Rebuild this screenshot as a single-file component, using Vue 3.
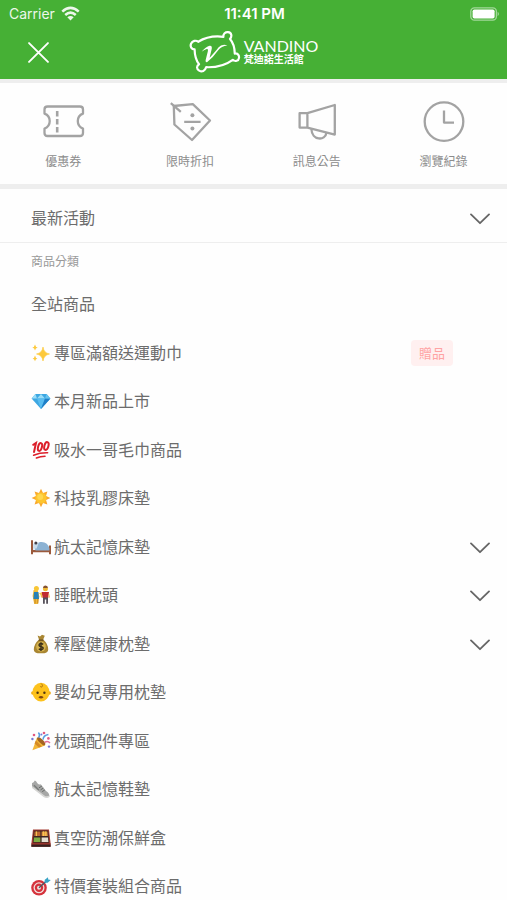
<template>
  <div class="app-shell">
    <header class="app-header">
      <div class="status-bar">
        <div class="carrier">
          <span>Carrier</span>
          <svg class="wifi" viewBox="0 0 18 14" aria-hidden="true">
            <path d="M1.2 5.2 Q9 -2 16.8 5.2" />
            <path d="M4 8.4 Q9 3.9 14 8.4" />
            <path class="wifi-dot" d="M9 13.6 L6 10.6 Q9 8 12 10.6 Z" />
          </svg>
        </div>
        <span class="time">11:41 PM</span>
        <div class="battery-wrap">
          <svg class="battery" viewBox="0 0 30 14" aria-hidden="true">
            <rect x="0.8" y="0.8" width="25.6" height="12.4" rx="3.6" fill="none" stroke="#fff" stroke-opacity="0.5" stroke-width="1.3" />
            <rect x="2.6" y="2.4" width="22" height="9.2" rx="1.8" fill="#fff" />
            <path d="M27.7 4.8 Q30 7 27.7 9.2 Z" fill="#fff" fill-opacity="0.55" />
          </svg>
        </div>
      </div>

      <div class="nav-bar">
        <button class="close-btn" type="button" aria-label="關閉">
          <svg viewBox="0 0 20 20"><path d="M1 1 L19 19 M19 1 L1 19" /></svg>
        </button>
        <a class="brand" href="#">
          <svg class="brand-mark" viewBox="0 0 52 42" aria-hidden="true">
            <path
              class="pillow"
              d="M9.2 10.8 Q20 4 34.4 5.8 C34 2.8 36.4 1 39 1.2 C42.8 1.6 43.2 5.6 41 8 Q45.5 13 45.8 22.6 C48 22 50.4 23.8 50 26.8 C49.6 30 46.2 31 43.8 28.8 Q33 36.8 17.2 36.2 C16 40 13 41.2 10.2 39.6 C7 37.8 7.8 34.6 10 33.2 Q5.8 27.6 5.6 18.4 C2.4 18.2 1 15.6 2 12.8 C3.4 9.8 7 8.8 9.2 10.8 Z"
            />
            <path
              class="letter"
              d="M12.6 20.8 Q16.8 15.6 20.6 14.8 Q23.6 14.4 22.6 18.6 L20.6 26.8 Q27 20 29.4 16.6 Q32.8 12.6 38.4 14.4 Q32.4 14.6 29 19.6 Q24.4 26.4 18 31.2 Q16.2 31.4 16.6 29.2 L18.8 20.6 Q19.6 17.4 17.8 18 Q15.6 18.6 12.6 20.8 Z"
            />
          </svg>
          <span class="brand-text">
            <span class="brand-en">VANDINO</span>
            <span class="brand-zh">梵迪諾生活館</span>
          </span>
        </a>
      </div>
    </header>

    <nav class="quick-links">
      <a v-for="link in quickLinks" :key="link.icon" class="quick-link" href="#">
        <svg viewBox="0 0 44 44" aria-hidden="true">
          <g v-if="link.icon === 'coupon'">
            <path d="M6.5 7.5 H39 Q42 7.5 42 10.5 V14.6 A8 8 0 0 0 42 29.6 V34 Q42 37 39 37 H6.5 Q3.5 37 3.5 34 V29.6 A8 8 0 0 0 3.5 14.6 V10.5 Q3.5 7.5 6.5 7.5 Z" />
            <path d="M16.2 12 V17.5 M16.2 20 V25.5 M16.2 28 V33.5" stroke-width="2.6" />
          </g>
          <g v-else-if="link.icon === 'discount'">
            <path d="M5.8 7 L24.8 5.2 L42 21.5 L24 41 L6.4 25.5 Z" />
            <path d="M2.8 4.2 L12.8 12.8 M16.2 22.8 H32.6" />
            <circle cx="24.4" cy="16.2" r="2" class="dot" />
            <circle cx="24.4" cy="29.6" r="2" class="dot" />
          </g>
          <g v-else-if="link.icon === 'news'">
            <path d="M4.6 14.2 H12.4 L39.8 6 V35.6 L12.4 28.6 H4.6 Z M12.4 14.2 V28.6" />
            <path d="M16.4 30 C16.8 41.6 30.4 42.2 31.4 33.8" />
          </g>
          <g v-else>
            <circle cx="22" cy="22.6" r="19.3" />
            <path d="M22 11.6 V23.6 H32" />
          </g>
        </svg>
        <span>{{ link.label }}</span>
      </a>
    </nav>

    <main class="menu">
      <button class="menu-row activity" type="button">
        <span>最新活動</span>
        <svg class="chevron" viewBox="0 0 20 14" aria-hidden="true"><path d="M1 3.4 L10 12.2 L19 3.4" /></svg>
      </button>

      <h2 class="section-title">商品分類</h2>
      <ul class="category-list">
        <li v-for="item in categories" :key="item.name">
          <component
            :is="item.children ? 'button' : 'a'"
            class="menu-row"
            :href="item.children ? undefined : '#'"
            :type="item.children ? 'button' : undefined"
          >
            <svg v-if="item.icon" class="emoji" viewBox="0 0 20 20" aria-hidden="true">
              <g v-if="item.icon === 'sparkles'" fill="#fdc93b">
                <path d="M12 4 Q12.8 10 18.5 11 Q12.8 12 12 18 Q11.2 12 5.5 11 Q11.2 10 12 4 Z" stroke="#fdc93b" stroke-width="0.6" />
                <path d="M4 1.5 Q4.4 4 6.7 4.5 Q4.4 5 4 7.5 Q3.6 5 1.3 4.5 Q3.6 4 4 1.5 Z M4 12.5 Q4.4 15 6.4 15.5 Q4.4 16 4 18.2 Q3.6 16 1.6 15.5 Q3.6 15 4 12.5 Z" />
              </g>
              <g v-else-if="item.icon === 'gem'">
                <path d="M4.4 3 H15.6 L19.4 7.6 L10 18 L0.6 7.6 Z" fill="#3da7e2" />
                <path d="M4.4 3 L6 7.6 H0.6 Z M10 3 L14 7.6 H6 Z" fill="#9bddf7" />
                <path d="M6 7.6 H14 L10 18 Z" fill="#59bdf0" />
                <path d="M14 7.6 H19.4 L10 18 Z" fill="#1f7fc7" />
                <path d="M15.6 3 L14 7.6 H19.4 Z" fill="#67c3ee" />
              </g>
              <g v-else-if="item.icon === 'hundred'" fill="none" stroke="#dc202b" stroke-width="2" stroke-linecap="round">
                <path d="M2.2 4.8 L5 3 L3 12" />
                <ellipse cx="9" cy="7" rx="1.9" ry="4" transform="rotate(16 9 7)" />
                <ellipse cx="15.4" cy="6" rx="2" ry="4" transform="rotate(16 15.4 6)" />
                <path d="M2.6 15.2 Q9 12.6 16.6 12.8 M5.4 18 Q9.4 16.4 14 16.2" stroke-width="1.6" />
              </g>
              <g v-else-if="item.icon === 'sun'">
                <path d="M10 0.8 L12 5 L16.4 3.6 L15 8 L19.4 10 L15 12 L16.4 16.4 L12 15 L10 19.2 L8 15 L3.6 16.4 L5 12 L0.6 10 L5 8 L3.6 3.6 L8 5 Z" fill="#f9a72b" />
                <circle cx="10" cy="10" r="5.6" fill="#fdc52e" />
                <circle cx="9.2" cy="9" r="3" fill="#fed750" />
              </g>
              <g v-else-if="item.icon === 'bed'">
                <path d="M0 3.2 H2 V11 H18 V8.4 H20 V17.2 H18 V15.2 H2 V17.2 H0 Z" fill="#9b5a3c" />
                <rect x="2" y="10" width="16" height="3" fill="#e4edf5" />
                <path d="M4 12.4 Q4.2 6.4 9 5 Q16.6 4 18.4 11.6 V13.4 H4.6 Z" fill="#8cb2d3" />
                <path d="M2.2 7 Q5 3.8 7.6 6.2 L5.6 11.4 H2.2 Z" fill="#c9dceb" />
                <circle cx="4.9" cy="6" r="1.5" fill="#423f47" />
              </g>
              <g v-else-if="item.icon === 'couple'">
                <path d="M2.6 5 L6.6 5 L8.4 11.6 L6.8 19 H3.2 L1.6 11 Z" fill="#efba39" />
                <circle cx="5.4" cy="3.6" r="2.5" fill="#f8c635" />
                <path d="M3 7 H7.4 L8 14 H2.4 Z" fill="#2781b8" />
                <path d="M3.4 14 H4.8 V18.6 H3.4 Z M6 14 H7.4 V18.6 H6 Z" fill="#d5952b" />
                <circle cx="14.4" cy="3.8" r="2.5" fill="#efb934" />
                <path d="M12 3 Q12.2 0.6 14.6 0.6 Q17 0.8 16.8 3 Z" fill="#855331" />
                <path d="M10.6 7 H18 L17.2 13 H11.6 Z" fill="#c02b31" />
                <path d="M12 12.6 H17 V18.8 H15.2 V14.6 H13.8 V18.8 H12 Z" fill="#57525b" />
                <path d="M8 8 L10.8 7.6 L11.4 12.6 H10 L9.6 10 Z M17.8 7.6 L19 12.6 H17.6 Z" fill="#f4c047" />
              </g>
              <g v-else-if="item.icon === 'money'">
                <path d="M6.6 1.6 L9 2.4 L11 0.8 L13.8 1.8 L12.2 5.4 Q17.4 10 17.2 15.6 Q17 19 13.4 19.2 H6.6 Q3 19 2.8 15.6 Q2.8 10 8 5.4 Z" fill="#a98632" />
                <path d="M8 5.4 H12.4 V6.8 H7.6 Z" fill="#67491d" />
                <ellipse cx="10" cy="12.6" rx="4.8" ry="5" fill="#d6b34d" />
                <path d="M12.2 10.4 Q9.6 8.6 8.2 10.4 Q7.6 12.2 10 12.6 Q12.8 13.2 12 14.8 Q10.4 16.4 7.8 14.8 M10 8.2 V17" fill="none" stroke="#382d18" stroke-width="1.4" />
              </g>
              <g v-else-if="item.icon === 'baby'">
                <circle cx="1.8" cy="11" r="1.7" fill="#eda916" />
                <circle cx="18.2" cy="11" r="1.7" fill="#eda916" />
                <ellipse cx="10" cy="10.2" rx="8.4" ry="9.4" fill="#fdc21d" />
                <path d="M10 1.4 Q12.6 3 11 5 Q9.6 5.6 9.4 4.2" fill="none" stroke="#b97d16" stroke-width="1" />
                <circle cx="6.6" cy="10.8" r="1.2" fill="#4e3513" />
                <circle cx="13.4" cy="10.8" r="1.2" fill="#4e3513" />
                <path d="M7.4 15.2 Q10 12.8 12.6 15.2 Q10 17.8 7.4 15.2 Z" fill="#7a4414" />
              </g>
              <g v-else-if="item.icon === 'party'">
                <path d="M6 6.4 L14 14.4 L1.4 19.2 Z" fill="#f2b638" />
                <path d="M4.8 9.4 L10.8 15.4 L8 16.6 L3.6 12.4 Z" fill="#d68a24" />
                <ellipse cx="10.2" cy="10.2" rx="2" ry="5.4" transform="rotate(-45 10.2 10.2)" fill="#a46421" />
                <path d="M7.6 6.6 Q9.6 4 7.4 1.4 M12 8.6 Q12.4 4.4 17.4 3.6" fill="none" stroke="#5a9de0" stroke-width="1.5" />
                <path d="M13.6 11.4 Q16.6 9.4 19 12" fill="none" stroke="#e36b97" stroke-width="1.5" />
                <g fill="#e2587f"><circle cx="3" cy="4" r="1.3" /><circle cx="13" cy="2" r="1.3" /><circle cx="17.4" cy="7.4" r="1.3" /></g>
                <g fill="#7579d4"><circle cx="1.4" cy="8" r="1.2" /><circle cx="18" cy="15.6" r="1.2" /><circle cx="10.4" cy="3.4" r="1" /></g>
              </g>
              <g v-else-if="item.icon === 'shoe'">
                <path d="M1 4 Q2.6 4.2 3.8 1.6 Q5 2 6.4 4.2 Q8 6 9.8 5.2 L15 12 Q18.4 14 18.4 17.4 Q15.8 19.4 13 17.2 L1 8.2 Z" fill="#a6a7a6" />
                <path d="M1 7 L13.4 16.4 Q15.6 18.2 18.4 16.6 V18 Q15.6 20 12.6 18 L1 9 Z" fill="#d6d6d4" />
                <path d="M8 8.8 L10.8 7.2 M9.6 10.8 L12.2 9.2 M11.2 12.6 L13.8 11" stroke="#666967" stroke-width="1" />
                <path d="M3 6.2 L7.8 11" stroke="#787b79" stroke-width="1.3" />
              </g>
              <g v-else-if="item.icon === 'bento'">
                <path d="M2 1.4 H18 L19.6 15.4 V18.8 H0.4 V15.4 Z" fill="#a43b31" />
                <path d="M2.8 2.4 H17.2 L18.2 14.8 H1.8 Z" fill="#3f2521" />
                <path d="M3.6 3.4 H9.4 V8 H3.2 Z" fill="#bf6930" />
                <path d="M10.6 3.4 H16.4 L16.8 8 H10.6 Z" fill="#e79845" />
                <path d="M3 9.4 H9.4 V14 H2.6 Z" fill="#81ad43" />
                <path d="M10.6 9.4 H17 L17.4 14 H10.6 Z" fill="#e3ded0" />
                <path d="M5.4 3.4 V8 M12.6 3.4 V8 M14.8 3.4 V8" stroke="#f8cf54" stroke-width="1" />
                <path d="M0.4 15.4 H19.6 V16.6 H0.4 Z" fill="#8c3029" />
                <path d="M0.4 16.6 H19.6 V18.8 H0.4 Z" fill="#34201e" />
              </g>
              <g v-else>
                <circle cx="8" cy="11.8" r="7.8" fill="#d5323c" />
                <circle cx="8" cy="11.8" r="5.5" fill="#f1dedb" />
                <circle cx="8" cy="11.8" r="4.2" fill="#d5323c" />
                <circle cx="8" cy="11.8" r="2" fill="#f1dedb" />
                <path d="M8 11.8 L15 5.4" stroke="#475965" stroke-width="1.3" />
                <path d="M13.4 6.8 L13.8 3.8 L17 1.2 L17.2 3.6 L19.8 4 L16.6 6.8 Z" fill="#37a2c5" />
              </g>
            </svg>
            <span class="name">{{ item.name }}</span>
            <span v-if="item.tag" class="tag">{{ item.tag }}</span>
            <svg v-if="item.children" class="chevron" viewBox="0 0 20 14" aria-hidden="true"><path d="M1 3.4 L10 12.2 L19 3.4" /></svg>
          </component>
        </li>
      </ul>
    </main>
  </div>
</template>

<script setup>
const quickLinks = [
  { icon: 'coupon', label: '優惠券' },
  { icon: 'discount', label: '限時折扣' },
  { icon: 'news', label: '訊息公告' },
  { icon: 'history', label: '瀏覽紀錄' },
];

const categories = [
  { name: '全站商品' },
  { name: '專區滿額送運動巾', icon: 'sparkles', tag: '贈品' },
  { name: '本月新品上市', icon: 'gem' },
  { name: '吸水一哥毛巾商品', icon: 'hundred' },
  { name: '科技乳膠床墊', icon: 'sun' },
  { name: '航太記憶床墊', icon: 'bed', children: true },
  { name: '睡眠枕頭', icon: 'couple', children: true },
  { name: '釋壓健康枕墊', icon: 'money', children: true },
  { name: '嬰幼兒專用枕墊', icon: 'baby' },
  { name: '枕頭配件專區', icon: 'party' },
  { name: '航太記憶鞋墊', icon: 'shoe' },
  { name: '真空防潮保鮮盒', icon: 'bento' },
  { name: '特價套裝組合商品', icon: 'target' },
];
</script>

<style>
body {
  margin: 0;
  background: #fff;
}
</style>

<style scoped>
.app-shell {
  height: 100vh;
  display: flex;
  flex-direction: column;
  overflow: hidden;
  background: #fefefe;
  color: #6c6c6c;
  font-family: Inter, "Noto Sans CJK TC", sans-serif;
}

a {
  color: inherit;
  text-decoration: none;
}

button {
  border: 0;
  background: none;
  color: inherit;
  font: inherit;
  cursor: pointer;
}

.app-header {
  flex: none;
  background: #46b035;
  color: #fff;
  border-bottom: 4px solid #eee;
}

.status-bar {
  display: grid;
  grid-template-columns: 1fr auto 1fr;
  align-items: center;
  height: 27px;
  padding: 0 7px 0 9px;
}

.carrier {
  display: flex;
  align-items: center;
  gap: 6px;
  font-size: 14px;
  opacity: 0.9;
}

.wifi {
  width: 19px;
  height: 15px;
  fill: none;
  stroke: #fff;
  stroke-width: 2.4;
}

.wifi-dot {
  fill: #fff;
  stroke: none;
}

.time {
  font-size: 15px;
  font-weight: 600;
}

.battery-wrap {
  display: flex;
  justify-content: flex-end;
}

.battery {
  width: 30px;
  height: 14px;
}

.nav-bar {
  display: grid;
  grid-template-columns: 1fr auto 1fr;
  align-items: center;
  height: 50px;
  padding: 0 22px 2px;
}

.close-btn {
  justify-self: start;
  display: flex;
  padding: 6px;
}

.close-btn svg {
  width: 21px;
  height: 21px;
  fill: none;
  stroke: #fff;
  stroke-width: 1.8;
  stroke-linecap: round;
}

.brand {
  display: flex;
  align-items: center;
  gap: 3px;
}

.brand-mark {
  width: 52px;
  height: 42px;
}

.pillow {
  fill: none;
  stroke: #fff;
  stroke-width: 2.2;
  stroke-linejoin: round;
}

.letter {
  fill: #fff;
}

.brand-text {
  display: flex;
  flex-direction: column;
}

.brand-en {
  font-family: Lato, sans-serif;
  font-size: 16px;
  line-height: 14px;
}

.brand-zh {
  font-size: 10px;
  font-weight: 700;
  line-height: 12px;
}

.quick-links {
  flex: none;
  display: grid;
  grid-template-columns: repeat(4, 1fr);
  padding: 16px 0 13px;
  border-bottom: 5px solid #eee;
}

.quick-link {
  display: flex;
  flex-direction: column;
  align-items: center;
  gap: 10px;
  color: #8c8c8c;
  font-size: 12px;
  line-height: 18px;
}

.quick-link svg {
  width: 44px;
  height: 44px;
  fill: none;
  stroke: #a3a3a3;
  stroke-width: 2.3;
  stroke-linecap: butt;
  stroke-linejoin: round;
}

.quick-link .dot {
  fill: #a3a3a3;
  stroke: none;
}

.menu {
  flex: 1;
  min-height: 0;
  overflow-y: auto;
  scrollbar-width: none;
}

.menu-row {
  box-sizing: border-box;
  display: flex;
  align-items: center;
  width: 100%;
  height: 100%;
  padding: 0 17px 0 31px;
  font-size: 16px;
  line-height: 24px;
  text-align: left;
}

.activity {
  height: 54px;
  padding-top: 4px;
  border-bottom: 1px solid #eee;
}

.section-title {
  margin: 0;
  padding: 10px 31px 9px;
  color: #999;
  font-size: 12px;
  font-weight: 400;
  line-height: 18px;
}

.category-list {
  margin: 0;
  padding: 0;
  list-style: none;
}

.category-list li {
  height: 48px;
}

.category-list li:nth-child(even) {
  height: 49px;
}

.emoji {
  flex: none;
  width: 20px;
  height: 20px;
  margin-right: 3px;
}

.tag {
  margin: 0 37px 0 auto;
  padding: 4px 8px;
  border-radius: 4px;
  background: #fff0f0;
  color: #ffa3a3;
  font-size: 13px;
  line-height: 18px;
}

.chevron {
  width: 20px;
  height: 14px;
  margin-left: auto;
  fill: none;
  stroke: #666;
  stroke-width: 1.8;
  stroke-linecap: round;
  stroke-linejoin: round;
}
</style>
